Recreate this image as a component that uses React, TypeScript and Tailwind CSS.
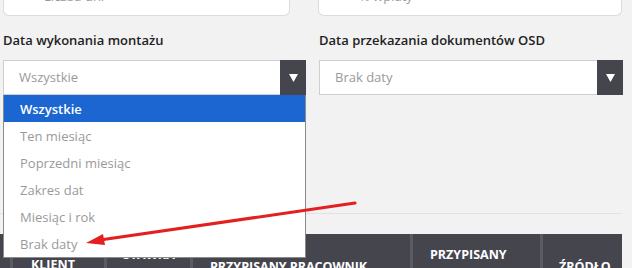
const options = [
  "Wszystkie",
  "Ten miesiąc",
  "Poprzedni miesiąc",
  "Zakres dat",
  "Miesiąc i rok",
  "Brak daty",
];

function Caret() {
  return (
    <svg width="9" height="8" viewBox="0 0 9 8">
      <polygon points="0,0 9,0 4.5,8" fill="#fff" />
    </svg>
  );
}

function Select({ value }: { value: string }) {
  return (
    <div className="flex h-[35px] border border-[#cfcfcf] bg-white">
      <div className="flex-1 flex items-center pl-[15px] pt-px text-[13px] text-[#9a9a9a]">
        {value}
      </div>
      <div className="w-[26px] -my-px -mr-px bg-[#45454e] flex items-center justify-center">
        <Caret />
      </div>
    </div>
  );
}

export default function App() {
  return (
    <div
      className="relative w-[632px] h-[268px] overflow-hidden bg-[#f2f2f2]"
      style={{ fontFamily: "'Open Sans', 'Noto Sans', sans-serif" }}
    >
      {/* Top inputs (cut) */}
      <div className="flex pl-[3px]">
        <div className="w-[287px] h-[16px] bg-white border border-t-0 border-[#dcdcdc] rounded-b-[6px] overflow-hidden">
          <div className="pl-[40px] -mt-[13px] text-[13px] text-[#9a9a9a]">Liczba dni</div>
        </div>
        <div className="ml-[28px] w-[304px] h-[16px] bg-white border border-t-0 border-[#dcdcdc] rounded-b-[6px] overflow-hidden">
          <div className="pl-[40px] -mt-[13px] text-[13px] text-[#9a9a9a]">% wpłaty</div>
        </div>
      </div>

      {/* Date filters */}
      <div className="flex pl-[3px] mt-[14px] gap-[13px]">
        <div className="w-[303px] flex flex-col">
          <div className="text-[13px] font-semibold text-[#222] h-[30px] leading-[20px]">
            Data wykonania montażu
          </div>
          <Select value="Wszystkie" />
        </div>
        <div className="w-[304px] flex flex-col">
          <div className="text-[13px] font-semibold text-[#222] h-[30px] leading-[20px]">
            Data przekazania dokumentów OSD
          </div>
          <Select value="Brak daty" />
        </div>
      </div>

      {/* Divider */}
      <div className="mt-[118px] w-[622px] border-t border-[#e2e2e2]" />

      {/* Table header */}
      <div className="mt-[20px] w-[622px] h-[40px] bg-[#45454e] flex text-white text-[12.5px] font-bold uppercase">
        <div className="w-[13px] border-r-[3px] border-[#5b5b63]" />
        <div className="w-[94px] border-r-[3px] border-[#5b5b63] pt-[22px] pl-[18px]">Klient</div>
        <div className="w-[86px] border-r-[3px] border-[#5b5b63] pt-[12px] pl-[16px]">Stawka</div>
        <div className="w-[220px] border-r-[3px] border-[#5b5b63] pt-[24px] pl-[17px]">Przypisany pracownik</div>
        <div className="w-[130px] border-r-[3px] border-[#5b5b63] pt-[12px] pl-[17px]">Przypisany</div>
        <div className="flex-1 pt-[24px] pl-[16px]">Źródło</div>
      </div>

      {/* Open dropdown */}
      <div className="absolute left-[3px] top-[95px] w-[303px] bg-white border border-[#8a8a8a] border-t-0 text-[13px]">
        {options.map((o, i) => (
          <div
            key={o}
            className={
              i === 0
                ? "h-[27px] flex items-center pl-[16px] pt-[2px] bg-[#1b66d1] text-white font-semibold"
                : "h-[27px] flex items-center pl-[16px] pt-[2px] text-[#9a9a9a]"
            }
          >
            {o}
          </div>
        ))}
      </div>

      {/* Red annotation arrow */}
      <svg className="absolute left-0 top-0" width="632" height="268">
        <line x1="355" y1="203" x2="100" y2="240" stroke="#e3201f" strokeWidth="3" strokeLinecap="round" />
        <polygon points="86,243 103,234 105,245" fill="#e3201f" />
      </svg>
    </div>
  );
}
